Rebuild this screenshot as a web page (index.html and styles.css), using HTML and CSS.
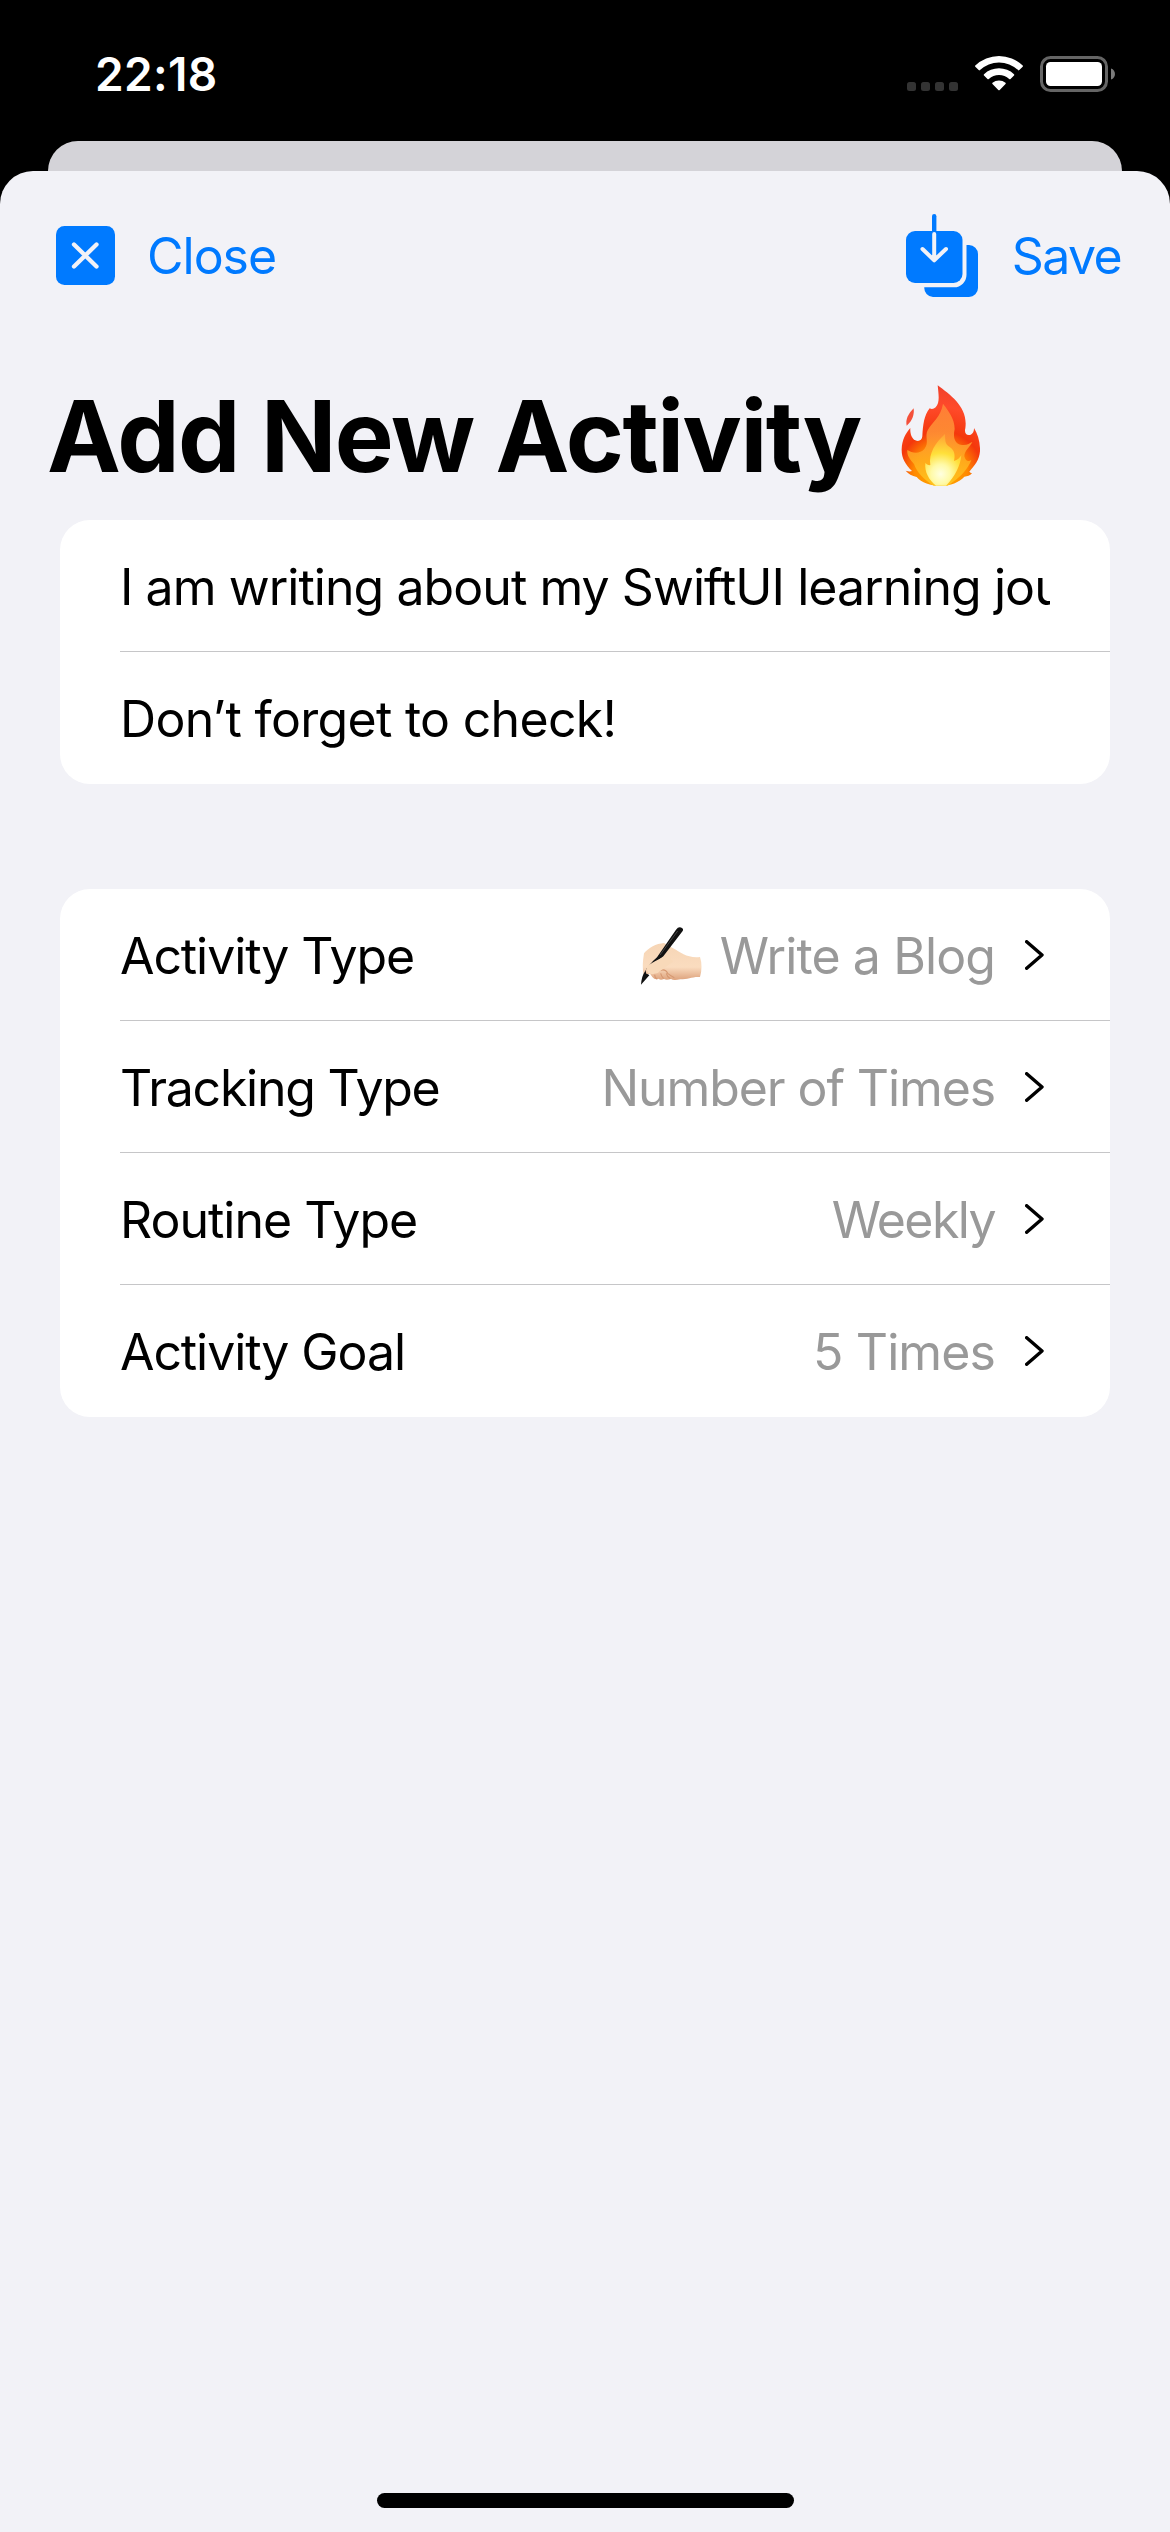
FILE: index.html
```html
<!DOCTYPE html>
<html lang="en">
<head>
<meta charset="utf-8">
<title>Add New Activity</title>
<link rel="stylesheet" href="styles.css">
</head>
<body>
<div class="screen">
  <header class="status">
    <span class="time">22:18</span>
    <div class="status-icons">
      <svg class="dots" viewBox="0 0 51 9" width="51" height="9"><g fill="#333"><rect width="9" height="9" rx="2.5"/><rect x="14" width="9" height="9" rx="2.5"/><rect x="28" width="9" height="9" rx="2.5"/><rect x="42" width="9" height="9" rx="2.5"/></g></svg>
      <svg class="wifi" viewBox="0 0 48 36" width="48" height="36"><g fill="#fff"><path d="M0.3 10.5 A34 34 0 0 1 47.7 10.5 Q48.300 11.100 47.700 11.700 L44.300 15.100 Q43.700 15.700 43 15.100 A27.500 27.500 0 0 0 5 15.100 Q4.300 15.700 3.700 15.100 L0.300 11.700 Q-0.300 11.100 0.300 10.500Z"/><path d="M9 19.200 A22 22 0 0 1 39 19.200 Q39.700 19.900 39 20.500 L35.500 24 Q34.900 24.600 34.200 24 A15 15 0 0 0 13.800 24 Q13.100 24.600 12.500 24 L9 20.500 Q8.300 19.900 9 19.200Z"/><path d="M17.500 27.800 A10 10 0 0 1 30.500 27.800 Q31.200 28.400 30.500 29 L24.700 35 Q24 35.700 23.300 35 L17.500 29 Q16.800 28.400 17.500 27.800Z"/></g></svg>
      <svg class="battery" viewBox="0 0 76 36" width="76" height="36"><rect x="1.500" y="1.500" width="65" height="33" rx="9" fill="none" stroke="#656565" stroke-width="3"/><rect x="6" y="6" width="56" height="24" rx="4.500" fill="#fff"/><path d="M71 12.500 C76.300 14 76.300 22 71 23.500Z" fill="#7b7b7b"/></svg>
    </div>
  </header>
  <div class="back-sheet"></div>
  <main class="sheet">
    <nav class="nav">
      <div class="nav-item">
        <svg viewBox="0 0 59 59" width="59" height="59"><rect width="59" height="59" rx="8.500" fill="#007aff"/><path d="M18 18.500 L40.500 40.500 M40.500 18.500 L18 40.500" stroke="#f2f2f7" stroke-width="4.300" stroke-linecap="round"/></svg>
        <span class="close">Close</span>
      </div>
      <div class="nav-item">
        <svg viewBox="0 0 72 83" width="72" height="83"><path d="M60.500 31 H63 A9 9 0 0 1 72 40 V74 A9 9 0 0 1 63 83 H27 A9 9 0 0 1 18.300 73.300 H48 A12.500 12.500 0 0 0 60.500 60.800Z" fill="#007aff"/><rect y="17" width="56.500" height="52" rx="9" fill="#007aff"/><path d="M28.200 17 V2.200" stroke="#007aff" stroke-width="4.400" stroke-linecap="round"/><path d="M28.200 20 V46 M16.500 35 L28.200 46.300 L40 35" fill="none" stroke="#f2f2f7" stroke-width="4" stroke-linecap="round" stroke-linejoin="round"/></svg>
        <span class="save">Save</span>
      </div>
    </nav>
    <h1 class="title"><span>Add New Activity</span>
      <svg class="fire" viewBox="90 45 237 306" width="79" height="102">
        <defs>
          <radialGradient id="fo" gradientUnits="userSpaceOnUse" cx="209" cy="310" r="265"><stop offset="0" stop-color="#ffb000"/><stop offset=".3" stop-color="#ff8a00"/><stop offset=".48" stop-color="#f4380c"/><stop offset=".75" stop-color="#ff4a2a"/><stop offset="1" stop-color="#f0402c"/></radialGradient>
          <linearGradient id="fm" gradientUnits="userSpaceOnUse" x1="0" y1="100" x2="0" y2="345"><stop offset="0" stop-color="#ff8638"/><stop offset=".4" stop-color="#ff9838"/><stop offset=".7" stop-color="#ffae20"/><stop offset="1" stop-color="#ffc820"/></linearGradient>
          <radialGradient id="fi" gradientUnits="userSpaceOnUse" cx="209" cy="312" r="115"><stop offset="0" stop-color="#ffffe0"/><stop offset=".25" stop-color="#fffaa8"/><stop offset=".55" stop-color="#ffe03a"/><stop offset="1" stop-color="#ffa535"/></radialGradient>
        </defs>
        <path d="M128 115 C130 132 126 151 107 167 C103 148 111 133 128 115Z" fill="#f4503a"/>
        <path d="M200 46 C240 76 292 112 283 175 C279 190 287 197 296 195 C306 193 309 184 309 174 C320 192 328 216 327 244 C325 270 311 287 295 305 Q298 309 303 310 Q294 320 280 320 C265 337 238 347 209 348 C178 347 151 338 137 321 Q116 316 104 302 Q116 306 123 303 C103 284 91 263 92 237 C93 210 104 190 118 174 C117 188 121 205 133 211 C143 216 153 211 154 199 C156 164 159 137 176 115 Q185 120 194 112 C207 96 203 76 200 46Z" fill="url(#fo)"/>
        <path d="M216 101 C231 121 251 145 251 177 C245 205 252 222 273 225 C288 227 296 219 304 216 C296 232 280 242 280 259 C283 272 291 277 301 270 C295 286 279 316 230 347 H188 C160 330 137 306 129 282 C117 269 107 256 109 240 C124 250 147 252 160 237 C176 218 160 198 170 181 C184 155 209 142 216 101Z" fill="url(#fm)" opacity=".85"/>
        <path d="M222 192 C223 211 221 222 236 231 C251 240 253 257 249 273 C260 271 266 263 271 256 C269 285 252 321 225 347 H195 C174 330 160 306 163 279 Q169 287 178 285 C172 250 195 216 222 192Z" fill="url(#fi)"/>
      </svg>
    </h1>
    <section class="card">
      <div class="row"><span class="field">I am writing about my SwiftUI learning jou</span></div>
      <div class="row"><span class="note">Don’t forget to check!</span></div>
    </section>
    <section class="card">
      <div class="row"><span class="label">Activity Type</span><span class="value">
        <svg class="hand" viewBox="60 75 186 177" width="62" height="59">
          <defs><linearGradient id="sk" x1="0" y1="0" x2="0" y2="1"><stop offset="0" stop-color="#f6d5b5"/><stop offset=".65" stop-color="#fadcbf"/><stop offset="1" stop-color="#dda27c"/></linearGradient></defs>
          <path d="M72 157 C86 140 108 128 132 126 L158 141 C184 155 202 172 240 168 Q249 196 240 228 C218 226 204 235 181 235 Q160 240 153 234 Q139 239 132 234 Q121 239 116 233 Q105 238 97 228 L90 218 L71 221 C66 200 69 177 72 157Z" fill="url(#sk)"/>
          <path d="M91 216 Q105 218 121 208 Q137 203 143 217 Q153 225 163 230 M104 221 Q104 230 111 234 M122 217 Q124 226 131 233 M139 217 Q141 227 151 233" fill="none" stroke="#d69871" stroke-width="3.500"/>
          <path d="M168 86 Q177 74 187 82 Q191 85 188 90 L130 166 Q119 176 101 187 Q87 193 79 203 Q74 219 84 220 L88 223 L63 251 Q65 225 74 213 Q87 190 111 169Z" fill="#111"/>
          <path d="M81 207 C76 194 91 190 105 181 Q126 169 145 162 L159 182 Q133 200 113 216 Q94 223 84 216Z" fill="#f8d9b9"/>
          <path d="M173 90 L120 162" stroke="#444" stroke-width="3"/>
        </svg>
        <span>Write a Blog</span></span><svg class="chev" viewBox="0 0 19 30" width="19" height="30"><path d="M1.700 1.700 L17 15 L1.700 28.300"/></svg></div>
      <div class="row"><span class="label tracking">Tracking Type</span><span class="value number">Number of Times</span><svg class="chev" viewBox="0 0 19 30" width="19" height="30"><path d="M1.700 1.700 L17 15 L1.700 28.300"/></svg></div>
      <div class="row"><span class="label routine">Routine Type</span><span class="value weekly">Weekly</span><svg class="chev" viewBox="0 0 19 30" width="19" height="30"><path d="M1.700 1.700 L17 15 L1.700 28.300"/></svg></div>
      <div class="row"><span class="label">Activity Goal</span><span class="value">5 Times</span><svg class="chev" viewBox="0 0 19 30" width="19" height="30"><path d="M1.700 1.700 L17 15 L1.700 28.300"/></svg></div>
    </section>
    <div class="home"></div>
  </main>
</div>
</body>
</html>
```
FILE: styles.css
```css
* { box-sizing: border-box; }
body { margin: 0; background: #000; font-family: Inter, "Liberation Sans", sans-serif; }
.screen { width: 1170px; height: 2532px; display: flex; flex-direction: column; background: #000; overflow: hidden; }
.status { height: 141px; flex: none; display: flex; justify-content: space-between; align-items: flex-start; padding: 46px 55px 0 95px; color: #fff; }
.time { font-size: 46px; font-weight: 600; line-height: 56px; letter-spacing: 0.3px; white-space: nowrap; }
.status-icons { display: flex; align-items: flex-end; height: 45px; }
.wifi { margin-left: 17px; }
.battery { margin: 0 -1px -1px 17px; }
.back-sheet { flex: none; height: 30px; margin: 0 48px; background: #d4d3d8; border-radius: 30px 30px 0 0; }
.sheet { flex: 1; display: flex; flex-direction: column; background: #f2f2f7; border-radius: 33px 33px 0 0; }
.nav { display: flex; justify-content: space-between; align-items: center; height: 169px; padding: 0 49px 0 56px; color: #007aff; font-size: 50px; }
.nav-item { display: flex; align-items: center; }
.nav-item span { line-height: 60px; white-space: nowrap; }
.close { margin-left: 32px; letter-spacing: -1px; }
.save { margin-left: 34px; letter-spacing: -1.6px; }
.title { margin: 0; height: 180px; padding: 12px 0 0 47px; display: flex; align-items: center; font-size: 99px; font-weight: 700; line-height: 120px; letter-spacing: -1.5px; white-space: nowrap; }
.fire { margin-left: 40px; }
.card { margin: 0 60px 105px; background: #fff; border-radius: 30px; overflow: hidden; }
.row { height: 132px; margin-left: 60px; padding-right: 66px; display: flex; align-items: center; font-size: 50px; line-height: 60px; letter-spacing: -0.9px; white-space: nowrap; border-bottom: 1px solid #c6c6c8; }
.row:last-child { border-bottom-color: transparent; }
.row > span { padding-top: 2px; }
.field { flex: 1; min-width: 0; margin-right: -6px; overflow: hidden; letter-spacing: -0.95px; }
.note { letter-spacing: -0.7px; }
.label { letter-spacing: -1.1px; }
.tracking { letter-spacing: -1.25px; }
.routine { letter-spacing: -1px; }
.value { margin-left: auto; display: flex; align-items: center; color: #999; }
.number { letter-spacing: -1.1px; }
.weekly { letter-spacing: -1.6px; }
.hand { margin-right: 18px; }
.chev { margin-left: 30px; fill: none; stroke: #000; stroke-width: 3.4; stroke-linecap: round; stroke-linejoin: round; }
.home { width: 417px; height: 15px; margin: auto auto 24px; border-radius: 8px; background: #000; }
```
